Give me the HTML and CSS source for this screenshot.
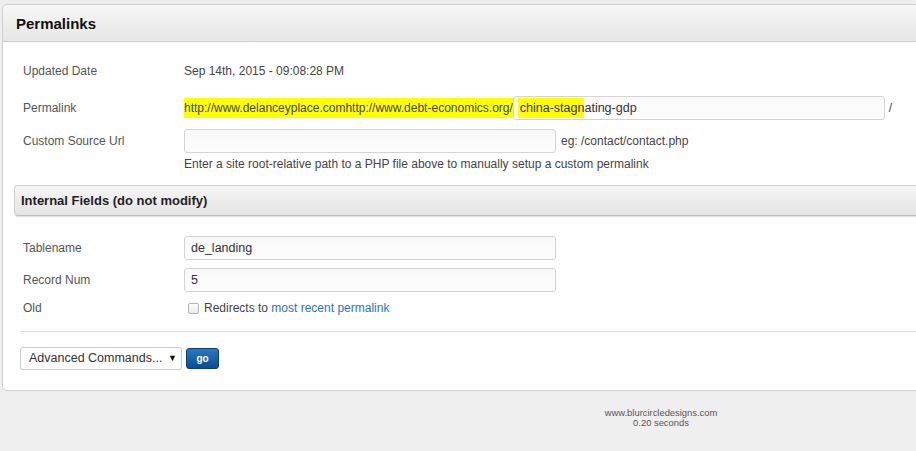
FILE: index.html
```html
<!DOCTYPE html>
<html>

<head>
    <title>Permalinks</title>
    <meta charset="utf-8">
    <link rel="stylesheet" href="styles.css">
</head>

<body>

    <div class="page">
        <div class="panel">
            <div class="panel-head">
                <h2>Permalinks</h2>
            </div>

            <div class="panel-body">
                <div class="row row-date">
                    <div class="label">Updated Date</div>
                    <div class="value">Sep 14th, 2015 - 09:08:28 PM</div>
                </div>

                <div class="row row-link">
                    <div class="label">Permalink</div>
                    <div class="value">
                        <mark class="hl">http://www.delanceyplace.comhttp://www.debt-economics.org/</mark><span class="field field-slug"><mark class="hl hl-in">china-stagn</mark>ating-gdp</span><span class="slash">/</span>
                    </div>
                </div>

                <div class="row row-source">
                    <div class="label">Custom Source Url</div>
                    <div class="value">
                        <span class="field"></span><span class="hint">eg: /contact/contact.php</span>
                    </div>
                </div>

                <div class="row row-help">
                    <div class="label"></div>
                    <div class="value">Enter a site root-relative path to a PHP file above to manually setup a custom permalink</div>
                </div>

                <div class="sub-head">
                    <h3>Internal Fields (do not modify)</h3>
                </div>

                <div class="row row-table">
                    <div class="label">Tablename</div>
                    <div class="value"><span class="field">de_landing</span></div>
                </div>

                <div class="row row-num">
                    <div class="label">Record Num</div>
                    <div class="value"><span class="field">5</span></div>
                </div>

                <div class="row row-old">
                    <div class="label">Old</div>
                    <div class="value"><span class="check"></span><span>Redirects to <a href="#">most recent permalink</a></span></div>
                </div>

                <hr>

                <div class="commands">
                    <div class="select">Advanced Commands...<span class="arrow">&#9660;</span></div>
                    <button class="go">go</button>
                </div>
            </div>
        </div>

        <footer>
            <p>www.blurcircledesigns.com</p>
            <p>0.20 seconds</p>
        </footer>
    </div>

</body>

</html>
```

FILE: styles.css
```css
html,
body {
    margin: 0;
    padding: 0;
    background: #efefef;
    overflow: hidden;
}

body {
    font-family: "Liberation Sans", Arial, sans-serif;
    font-size: 12px;
    color: #444;
}

.page {
    width: 1322px;
    padding-top: 4px;
}

.panel {
    margin-left: 2px;
    background: #fff;
    border: 1px solid #cfcfcf;
    border-radius: 5px;
    padding-bottom: 20px;
}

.panel-head {
    height: 36px;
    border-bottom: 1px solid #ccc;
    border-radius: 5px 5px 0 0;
    background: linear-gradient(#f7f7f7, #e6e6e6);
}

.panel-head h2 {
    margin: 0;
    padding-left: 13px;
    line-height: 37px;
    font-size: 15px;
    font-weight: bold;
    color: #111;
}

.panel-body {
    padding: 17px 0 0 20px;
}

.row {
    display: flex;
    align-items: center;
}

.label {
    width: 161px;
    flex: none;
    color: #555;
}

.value {
    display: flex;
    align-items: center;
    color: #444;
    white-space: nowrap;
}

.row-date {
    height: 24px;
}

.row-link {
    height: 24px;
    margin-top: 13px;
}

.row-source {
    height: 24px;
    margin-top: 9px;
}

.row-help {
    height: 16px;
    margin-top: 3px;
}

.field {
    display: inline-block;
    box-sizing: border-box;
    width: 372px;
    height: 24px;
    line-height: 22px;
    padding-left: 6px;
    border: 1px solid #d4d4d4;
    border-radius: 3px;
    background: linear-gradient(#f9f9f9, #fdfdfd);
    font-size: 12.5px;
    color: #333;
}

.hl {
    background: #ffff00;
    color: #444;
    padding: 3px 0;
}

.field-slug {
    padding-left: 4px;
}

.hl-in {
    padding: 3px 0 3px 2px;
    color: #333;
}

.slash {
    margin-left: 4px;
}

.hint {
    margin-left: 5px;
}

.sub-head {
    margin: 13px 0 0 -9px;
    height: 29px;
    border: 1px solid #d2d2d2;
    border-right: none;
    border-bottom-color: #bdbdbd;
    border-radius: 4px 0 0 4px;
    background: linear-gradient(#f5f5f5, #e5e5e5);
    box-shadow: 0 1px 1px rgba(0, 0, 0, 0.12);
}

.sub-head h3 {
    margin: 0;
    padding-left: 6px;
    line-height: 29px;
    font-size: 13px;
    font-weight: bold;
    color: #222;
}

.row-table {
    height: 24px;
    margin-top: 20px;
}

.row-num {
    height: 24px;
    margin-top: 8px;
}

.row-old {
    height: 16px;
    margin-top: 8px;
}

.check {
    display: inline-block;
    box-sizing: border-box;
    width: 11px;
    height: 11px;
    margin: 0 5px 0 4px;
    border: 1px solid #b5b5b5;
    border-radius: 2px;
    background: linear-gradient(#fff, #e9e9e9);
}

a {
    color: #2a76c6;
    text-decoration: none;
}

hr {
    margin: 15px 0 0 -3px;
    border: none;
    border-top: 1px solid #ddd;
}

.commands {
    display: flex;
    align-items: center;
    margin: 15px 0 0 -3px;
}

.select {
    box-sizing: border-box;
    width: 162px;
    height: 23px;
    line-height: 21px;
    padding-left: 8px;
    border: 1px solid #ccc;
    border-radius: 3px;
    background: #fff;
    font-size: 12.5px;
    color: #333;
    position: relative;
}

.arrow {
    position: absolute;
    right: 4px;
    top: 0;
    font-size: 9px;
    color: #111;
}

.go {
    margin-left: 4px;
    width: 33px;
    height: 21px;
    padding: 0;
    border: 1px solid #0b3f78;
    border-radius: 3px;
    background: linear-gradient(#2a78c0, #0a4c92);
    color: #fff;
    font-family: "Liberation Sans", Arial, sans-serif;
    font-size: 10px;
    font-weight: bold;
}

footer {
    padding-top: 17px;
    text-align: center;
    font-size: 9.4px;
    color: #555;
}

footer p {
    margin: 0;
    line-height: 10px;
}
```
